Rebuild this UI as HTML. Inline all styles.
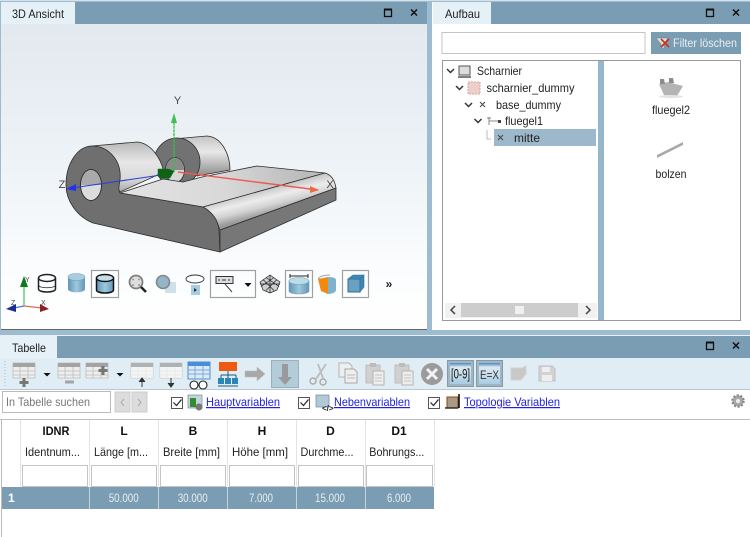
<!DOCTYPE html>
<html><head><meta charset="utf-8"><style>
html,body{margin:0;padding:0;background:#fff;width:750px;height:537px;overflow:hidden}
svg{display:block;font-family:"Liberation Sans",sans-serif;font-size:12px;fill:#222;filter:blur(.3px)}
.l{fill:#2222dd;text-decoration:underline}
.c{text-anchor:middle}
.b{font-weight:bold}
</style></head><body>
<svg width="750" height="537" viewBox="0 0 750 537" xmlns="http://www.w3.org/2000/svg">
<defs>
<linearGradient id="bg" x1="0" y1="0" x2="0" y2="1"><stop offset="0" stop-color="#e0e7ee"/><stop offset=".5" stop-color="#eef3f7"/><stop offset=".85" stop-color="#fcfdfe"/><stop offset="1" stop-color="#fff"/></linearGradient>
<linearGradient id="barrel" x1="0" y1="0" x2="0" y2="1"><stop offset="0" stop-color="#b8b8b8"/><stop offset=".4" stop-color="#e6e6e6"/><stop offset=".75" stop-color="#d8d8d8"/><stop offset="1" stop-color="#a8a8a8"/></linearGradient>
<linearGradient id="barrel2" x1="0" y1="0" x2="0" y2="1"><stop offset="0" stop-color="#c4c4c4"/><stop offset=".4" stop-color="#e8e8e8"/><stop offset="1" stop-color="#8c8c8c"/></linearGradient>
<linearGradient id="plate" gradientUnits="userSpaceOnUse" x1="130" y1="205" x2="300" y2="165"><stop offset="0" stop-color="#e2e2e2"/><stop offset=".55" stop-color="#d8d8d8"/><stop offset="1" stop-color="#bcbcbc"/></linearGradient>
<linearGradient id="round" gradientUnits="userSpaceOnUse" x1="203" y1="205" x2="209" y2="229"><stop offset="0" stop-color="#c8c8c8"/><stop offset=".35" stop-color="#ececec"/><stop offset=".65" stop-color="#d4d4d4"/><stop offset="1" stop-color="#9a9a9a"/></linearGradient>
<linearGradient id="cyl" x1="0" y1="0" x2="1" y2="0"><stop offset="0" stop-color="#5f95b7"/><stop offset=".5" stop-color="#9fc8dc"/><stop offset="1" stop-color="#6396b6"/></linearGradient>
<linearGradient id="win" x1="0" y1="0" x2="0" y2="1"><stop offset="0" stop-color="#4d86bb"/><stop offset=".2" stop-color="#dce9f2"/><stop offset="1" stop-color="#a9cce0"/></linearGradient>
<g id="tbl"><rect width="22" height="15" fill="#eeeeee" stroke="#b0b0b0" stroke-width=".6"/><rect width="22" height="4" fill="#a4a4a4"/><path d="M0 8h22M0 12h22M7 4v11M15 4v11" stroke="#bcbcbc" stroke-width=".8" fill="none"/></g>
<g id="pad"><rect x="1" y="3" width="14" height="18" fill="#d0d0d0" stroke="#bcbcbc"/><rect x="5" y="1" width="6" height="4" fill="#bcbcbc"/><rect x="8" y="9" width="11" height="14" fill="#eee" stroke="#b4b4b4"/><path d="M10 13h7M10 16h7M10 19h7" stroke="#c4c4c4"/></g>
</defs>

<rect width="750" height="537" fill="#9dbccf"/>
<rect x="0" y="0" width="750" height="1" fill="#d5e2ea"/>

<!-- 3D panel -->
<rect x="1" y="2" width="426" height="327" fill="url(#bg)"/>
<rect x="75" y="2" width="352" height="22" fill="#7b9db3"/>
<rect x="1" y="2" width="74" height="22" fill="#e6f1f7"/>
<text x="12" y="18" textLength="52" lengthAdjust="spacingAndGlyphs">3D Ansicht</text>
<rect x="384.500" y="9.500" width="7" height="7" fill="none" stroke="#111" stroke-width="1.300"/><path d="M384 9.500h8" stroke="#111" stroke-width="2"/>
<path d="M411 9.500l6 6M417 9.500l-6 6" stroke="#111" stroke-width="1.500"/>

<!-- model -->
<g stroke="#2e2e2e" stroke-width=".8" stroke-linejoin="round">
<!-- back barrel -->
<path d="M173 139L207 136C222 137 230 155 230 170L197 176L196 150Z" fill="url(#barrel2)"/>
<ellipse cx="177" cy="162" rx="23" ry="24" fill="#727272"/>
<ellipse cx="175" cy="170" rx="9.500" ry="12.500" fill="#d8d8d8"/>
<path d="M166 170C166 162 170 158 175 158C180 158 184 162 184 170Z" fill="#8a8a8a" stroke="none"/>
<!-- front barrel -->
<path d="M92 146L137 142C150 143 160 156 164 172L120 192Z" fill="url(#barrel)"/>
<!-- plate -->
<path d="M120 193L163 179L183 182L202 177L257 166L325 173L203 207Z" fill="url(#plate)"/>
<path d="M203 207L325 173C332 175 335 182 336 188L220 230C216 219 211 212 203 207Z" fill="url(#round)"/>
<!-- side -->
<path d="M220 230L336 188V200L220 252Z" fill="#777"/>
<!-- front face -->
<path d="M120 193L203 207C212 212 218 220 219 230L220 252L93 223C76 216 66 200 66 185C66 163 78 146 92 146C108 146 122 160 120 180C119 186 118 190 120 193Z" fill="#6f6f6f"/>
<ellipse cx="91" cy="185" rx="10.500" ry="15.500" fill="#dcdcdc"/>
<path d="M81 185C81 176 85 170 91 170C97 170 101 176 101 185Z" fill="#aaa" stroke="none"/>
<ellipse cx="91" cy="185" rx="10.500" ry="15.500" fill="none"/>
</g>
<!-- axes -->
<path d="M174 172L174 120" stroke="#34c248" stroke-width="1.300" stroke-dasharray="3 .6"/>
<path d="M174 113l-3 10h6z" fill="#3fbf55"/>
<path d="M178 172L318 190" stroke="#ee5a50" stroke-width="1.400"/>
<path d="M319 190l-9-4v7z" fill="#ee6a40"/>
<path d="M168 174L72 188" stroke="#2a3fd0" stroke-width="1.100"/>
<path d="M66 189l10-5v7z" fill="#2233ee"/>
<path d="M158 169h10l6 2-4 7-10 0-2-3z" fill="#0f6412" stroke="#063" stroke-width=".5"/>
<text x="177.500" y="104" class="c" style="font-size:11px" fill="#444">Y</text>
<text x="330" y="188" class="c" style="font-size:11px" fill="#444">X</text>
<text x="62" y="188" class="c" style="font-size:11px" fill="#444">Z</text>

<!-- bottom toolbar -->
<path d="M24 306V285" stroke="#58c868" stroke-width="1.300"/><path d="M24 276l-4 11h8z" fill="#0d7a1e"/>
<path d="M24 306L42 308" stroke="#e06a60" stroke-width="1.300"/><path d="M49 309l-9-5v8z" fill="#8f1f26"/>
<path d="M24 306L14 308" stroke="#5b6ce0" stroke-width="1.300"/><path d="M6 309l10-5v8z" fill="#1e2b95"/>
<text x="25" y="282" style="font-size:7px" fill="#444">Y</text><text x="41" y="305" style="font-size:7px" fill="#444">X</text><text x="11" y="305" style="font-size:7px" fill="#444">Z</text>

<g fill="none" stroke="#222" stroke-width="1.500"><ellipse cx="47" cy="278" rx="8.500" ry="3.500"/><path d="M38.500 278V289C38.500 293 55.500 293 55.500 289V278"/><path d="M38.500 285.500C41 288.500 53 288.500 55.500 285.500" stroke-width=".7"/></g>
<path d="M68 277V289C68 293.500 85 293.500 85 289V277Z" fill="url(#cyl)"/><ellipse cx="76.500" cy="277" rx="8.500" ry="3.500" fill="#a9cde0" stroke="#6f9fbc" stroke-width=".6"/>
<rect x="91.500" y="270.500" width="27" height="27" fill="none" stroke="#a0a0a0" stroke-width="1.200"/>
<path d="M96.500 278V290C96.500 294 113.500 294 113.500 290V278Z" fill="url(#cyl)" stroke="#111" stroke-width="1.500"/><ellipse cx="105" cy="278" rx="8.500" ry="3.500" fill="#c3dde9" stroke="#111" stroke-width="1.400"/>

<circle cx="136" cy="282" r="6.500" fill="#dedede" stroke="#7f7f7f" stroke-width="1.800"/><path d="M141 287l5 5" stroke="#222" stroke-width="2.500"/><path d="M132.500 279.500h1M138.500 279.500h1M132.500 285h1M138.500 285h1" stroke="#555" stroke-width="1.500"/>
<rect x="165" y="282" width="11" height="11" fill="#d0e0ea"/><circle cx="163" cy="282" r="6.500" fill="#93b5ca" stroke="#858585" stroke-width="1.600"/>
<ellipse cx="195" cy="279" rx="9" ry="4" fill="none" stroke="#333" stroke-width=".9"/><rect x="191" y="285" width="9" height="10" fill="#a8cde0"/><path d="M194 288v4l3-2z" fill="#234"/>
<rect x="210.500" y="270.500" width="45" height="27" fill="none" stroke="#a0a0a0" stroke-width="1.200"/>
<rect x="216" y="276.500" width="17" height="7" fill="#ddd" stroke="#333"/><path d="M218 280h2M222 280h4M228 280h2" stroke="#333"/><path d="M225 284l7 8" stroke="#444"/>
<path d="M244.500 283h7l-3.500 4z" fill="#111"/>
<g fill="#cfcfcf" stroke="#222" stroke-width=".7"><path d="M260 282l10-7 10 7-3 8-7 3-7-3z"/><path d="M263 279.500l11 11M266 277.500l13 9M270 275.500l0 17.500M277 279.500l-11 11M274 277.500l-13 9M260 284h20" fill="none"/></g>
<rect x="285.500" y="270.500" width="27" height="27" fill="none" stroke="#a0a0a0" stroke-width="1.200"/>
<path d="M289 281V291C289 295 309 295 309 291V281Z" fill="url(#cyl)" stroke="#6f9fbc" stroke-width=".6"/><ellipse cx="299" cy="281" rx="10" ry="3.500" fill="#bcdbe8" stroke="#6f9fbc" stroke-width=".6"/><path d="M290 276h18M290 274v4M308 274v4" stroke="#222"/>
<path d="M318 279L328 277V294L321 291Z" fill="#f28a10"/><path d="M328 277C333 277 336 278 336 280V290C336 292 333 294 328 294Z" fill="#7fb2cd"/><path d="M318 279C320 276 325 275 330 275" stroke="#8ab" fill="none"/>
<rect x="342.500" y="270.500" width="26" height="27" fill="none" stroke="#a0a0a0" stroke-width="1.200"/>
<path d="M348 279v13h12v-13z" fill="#6aa0c0" stroke="#2f6f9a"/><path d="M348 279l5-4h11l-4 4zM360 279l4-4v12l-4 5z" fill="#3f86b4" stroke="#2f6f9a" stroke-width=".6"/>
<text x="389" y="288" class="c b" style="font-size:12px" fill="#222">»</text>

<rect x="1" y="329" width="426" height="1" fill="#666"/>

<!-- Aufbau panel -->
<rect x="432" y="2" width="318" height="328" fill="#fff"/>
<rect x="491" y="2" width="259" height="22" fill="#7b9db3"/>
<rect x="433" y="2" width="58" height="22" fill="#e6f1f7"/>
<text x="445" y="18" textLength="35" lengthAdjust="spacingAndGlyphs">Aufbau</text>
<rect x="706.500" y="9.500" width="7" height="7" fill="none" stroke="#111" stroke-width="1.300"/><path d="M706 9.500h8" stroke="#111" stroke-width="2"/>
<path d="M733 9.500l6 6M739 9.500l-6 6" stroke="#111" stroke-width="1.500"/>
<rect x="442" y="32.500" width="203" height="21" fill="#fff" stroke="#c4c4c4"/>
<rect x="651" y="32" width="90" height="22" fill="#7b9db3"/>
<path d="M656 38h12l-4 6v5l-3-2v-3z" fill="#ddd" stroke="#777" stroke-width=".5"/><path d="M661 39l8 8M669 39l-8 8" stroke="#c8321c" stroke-width="1.600"/>
<text x="673" y="47" fill="#e8eef2" textLength="64" lengthAdjust="spacingAndGlyphs">Filter löschen</text>
<rect x="442.500" y="60.500" width="298" height="260" fill="#fff" stroke="#999"/>
<rect x="598" y="61" width="6" height="259" fill="#95b6cb"/>
<rect x="494" y="129" width="102" height="17" fill="#9db8ca"/>
<g fill="none" stroke="#333" stroke-width="1.500">
<path d="M447 69l3.500 3.500L454 69M456 86l3.500 3.500L463 86M465 103l3.500 3.500L472 103M474.500 119l3.500 3.500L481.500 119"/></g>
<path d="M487 130v9h4" fill="none" stroke="#bbb"/>
<rect x="459" y="66" width="11" height="9" fill="#ddd" stroke="#555"/><path d="M458 77h13" stroke="#555" stroke-width="1.500"/>
<rect x="468" y="82" width="12" height="12" fill="#eccfc8" stroke="#d6a79d" stroke-dasharray="2 1"/>
<path d="M480 102l5 5M485 102l-5 5M498 135l5 5M503 135l-5 5" stroke="#444"/>
<path d="M489 117v8M487 118h4M489 121h10" stroke="#888" fill="none"/><rect x="498" y="120" width="3" height="3" fill="#444"/>
<text x="477" y="75" textLength="45" lengthAdjust="spacingAndGlyphs">Scharnier</text>
<text x="486.500" y="92" textLength="88" lengthAdjust="spacingAndGlyphs">scharnier_dummy</text>
<text x="496" y="109" textLength="65" lengthAdjust="spacingAndGlyphs">base_dummy</text>
<text x="505" y="125" textLength="38" lengthAdjust="spacingAndGlyphs">fluegel1</text>
<text x="514" y="142" textLength="26" lengthAdjust="spacingAndGlyphs">mitte</text>
<!-- part thumbs -->
<path d="M659 84l9-2 15 4-6 10-13-1z" fill="#b4b4b4"/><path d="M660 79h4l1 5h-5zM669 78h4l1 5h-5z" fill="#8c8c8c"/><ellipse cx="671" cy="96.500" rx="12" ry="1.500" fill="#e2e2e2"/>
<text x="671" y="114" class="c" textLength="38" lengthAdjust="spacingAndGlyphs">fluegel2</text>
<path d="M657 155L683 142V145L657 158Z" fill="#aaa"/>
<text x="671" y="178" class="c" textLength="31" lengthAdjust="spacingAndGlyphs">bolzen</text>
<!-- scrollbar -->
<rect x="445" y="303" width="152" height="15" fill="#f1f1f1"/>
<rect x="461" y="303" width="117" height="14" fill="#cdcdcd"/>
<rect x="515" y="306" width="9" height="8" fill="#f0f0f0"/>
<path d="M455 306l-4 4 4 4M586 306l4 4-4 4" fill="none" stroke="#444" stroke-width="1.500"/>

<!-- Tabelle panel -->
<rect x="0" y="335" width="750" height="1" fill="#e6eff4"/>
<rect x="0" y="336" width="750" height="201" fill="#fff"/>
<rect x="57" y="336" width="693" height="22" fill="#7b9db3"/>
<rect x="0" y="336" width="57" height="22" fill="#e6f1f7"/>
<text x="12" y="352" textLength="34" lengthAdjust="spacingAndGlyphs">Tabelle</text>
<rect x="706.500" y="342.500" width="7" height="7" fill="none" stroke="#111" stroke-width="1.300"/><path d="M706 342.500h8" stroke="#111" stroke-width="2"/>
<path d="M733 342.500l6 6M739 342.500l-6 6" stroke="#111" stroke-width="1.500"/>
<rect x="0" y="358" width="750" height="31" fill="#e0edf4"/>
<rect x="0" y="389" width="750" height="1" fill="#b9c9d2"/>
<path d="M5 361v26" stroke="#a9bcc7" stroke-dasharray="1 2"/>

<use href="#tbl" x="13" y="363"/><path d="M24 378v9M19.500 382.500h9" stroke="#777" stroke-width="3"/>
<path d="M43.500 373h7l-3.500 3.500z" fill="#111"/>
<use href="#tbl" x="58" y="363"/><path d="M65 382h9" stroke="#a4a4a4" stroke-width="3"/>
<use href="#tbl" x="86" y="363"/><path d="M103 366v9M98.500 370.500h9" stroke="#777" stroke-width="3"/>
<path d="M116.500 373h7l-3.500 3.500z" fill="#111"/>
<use href="#tbl" x="131" y="363" opacity=".8"/><rect x="131" y="367" width="22" height="11" fill="#f6f6f6" opacity=".7"/><path d="M142 387v-8M139 382l3-4 3 4" fill="#333" stroke="#333"/>
<use href="#tbl" x="160" y="363" opacity=".8"/><rect x="160" y="367" width="22" height="11" fill="#f6f6f6" opacity=".7"/><path d="M171 378v8M168 383l3 4 3-4" fill="#333" stroke="#333"/>
<rect x="188" y="362" width="22" height="17" fill="#dbe9f5" stroke="#4f8fd0"/><rect x="188" y="362" width="22" height="4" fill="#4a8ddb"/><path d="M188 370h22M188 374h22M195 366v13M203 366v13" stroke="#5f9ad8" stroke-width=".7"/>
<circle cx="194" cy="385" r="4" fill="#fff" stroke="#222" stroke-width="1.100"/><circle cx="203" cy="385" r="4" fill="#fff" stroke="#222" stroke-width="1.100"/>
<rect x="219" y="362" width="18" height="9" fill="#ee5a10"/><path d="M228 371v4M221 375h15M221 375v3M228 375v3M236 375v3" stroke="#1c5a80" fill="none"/><path d="M218 378h6v6h-6zM225 378h6v6h-6zM232 378h6v6h-6z" fill="#2a86b8"/><path d="M218 386h20" stroke="#1c5a80"/>
<path d="M245 371h12v-4l8 7-8 7v-4h-12z" fill="#a8a8a8" stroke="#bbb" stroke-width=".5"/>
<rect x="271.500" y="360.500" width="27" height="27" fill="#b3ccd9" stroke="#9cb0bc"/>
<path d="M282 364h6v13h4l-7 8-7-8h4z" fill="#9a9a9a"/>
<path d="M326 364l-10 15M318 364l5 14" stroke="#bcbcbc" stroke-width="1.800"/><circle cx="313" cy="381" r="3" fill="none" stroke="#aaa" stroke-width="1.400"/><circle cx="323" cy="382" r="3" fill="none" stroke="#aaa" stroke-width="1.400"/>
<path d="M339 363h10l3 3v11h-13z" fill="#eee" stroke="#b4b4b4"/><path d="M345 369h9l3 3v11h-12z" fill="#eee" stroke="#a8a8a8"/><path d="M347 375h8M347 378h8" stroke="#bbb"/>
<use href="#pad" x="365" y="362"/><use href="#pad" x="394" y="362"/>
<circle cx="432" cy="374" r="11" fill="#9b9b9b"/><path d="M427 369l10 10M437 369l-10 10" stroke="#f2f2f2" stroke-width="3"/>
<rect x="447.500" y="360.500" width="26" height="26" fill="#9fb6c4" stroke="#8699a6"/>
<rect x="450" y="363" width="21" height="21" fill="url(#win)"/><text x="460.500" y="378.500" class="c" style="font-size:14px" fill="#111" textLength="19" lengthAdjust="spacingAndGlyphs">[0-9]</text>
<rect x="476.500" y="360.500" width="26" height="26" fill="#9fb6c4" stroke="#8699a6"/>
<rect x="479" y="363" width="21" height="21" fill="url(#win)"/><text x="489.500" y="379" class="c" style="font-size:12px" fill="#333" textLength="19" lengthAdjust="spacingAndGlyphs">E=X</text>
<path d="M511 368h11l4-2v8l-5 6h-10z" fill="#c8c8c8" stroke="#d2d2d2"/>
<path d="M539 366h13l3 3v12h-16z" fill="#d2d2d2" stroke="#c0c0c0"/><rect x="542" y="367" width="8" height="5" fill="#eee"/><rect x="542" y="375" width="10" height="6" fill="#eee"/>

<!-- search row -->
<rect x="2.500" y="391.500" width="108" height="21" fill="#fff" stroke="#bbb"/>
<text x="6" y="406" fill="#777" textLength="84" lengthAdjust="spacingAndGlyphs">In Tabelle suchen</text>
<rect x="115" y="392" width="15" height="20" fill="#dcdcdc" stroke="#ccc"/><rect x="132" y="392" width="15" height="20" fill="#dcdcdc" stroke="#ccc"/>
<path d="M124 399l-3 3.500 3 3.500M138 399l3 3.500-3 3.500" fill="none" stroke="#aaa"/>
<g fill="#fff" stroke="#555"><rect x="171.500" y="397.500" width="11" height="11"/><rect x="298.500" y="397.500" width="11" height="11"/><rect x="428.500" y="397.500" width="11" height="11"/></g>
<g fill="none" stroke="#222" stroke-width="1.200"><path d="M173.500 402.500l3 3 5-6M300.500 402.500l3 3 5-6M430.500 402.500l3 3 5-6"/></g>
<rect x="188" y="395" width="14" height="13" fill="#c6d3dc" stroke="#6a8aa0" stroke-width=".7"/><rect x="190" y="398" width="6" height="9" fill="#2f8f2f"/><circle cx="199" cy="407" r="3.500" fill="#777"/>
<rect x="316" y="395" width="13" height="12" fill="#b3c8d6" stroke="#6a8aa0" stroke-width=".7"/><text x="322" y="411" style="font-size:8px;font-weight:bold" fill="#222">&lt;/&gt;</text>
<rect x="447" y="397" width="11" height="11" fill="#a89a86" stroke="#8a4a12"/><path d="M459 394v14" stroke="#111" stroke-width="1.600"/><path d="M445 408h13" stroke="#222" stroke-width="1.400"/>
<text x="206" y="406" class="l" textLength="74" lengthAdjust="spacingAndGlyphs">Hauptvariablen</text>
<text x="334" y="406" class="l" textLength="76" lengthAdjust="spacingAndGlyphs">Nebenvariablen</text>
<text x="464" y="406" class="l" textLength="96" lengthAdjust="spacingAndGlyphs">Topologie Variablen</text>
<circle cx="738" cy="401" r="5.500" fill="#aaa" stroke="#888" stroke-width="2.500" stroke-dasharray="2 1.500"/><circle cx="738" cy="401" r="2" fill="#eee"/>

<!-- table -->
<rect x="0" y="419" width="750" height="1" fill="#c0c0c0"/>
<rect x="1" y="420" width="1" height="117" fill="#bbb"/>
<g fill="#e4e4e4"><rect x="20" y="420" width="1" height="67"/><rect x="89" y="420" width="1" height="67"/><rect x="158" y="420" width="1" height="67"/><rect x="227" y="420" width="1" height="67"/><rect x="296" y="420" width="1" height="67"/><rect x="365" y="420" width="1" height="67"/><rect x="434" y="420" width="1" height="67"/></g>
<g text-anchor="middle" style="font-weight:bold" fill="#111">
<text x="56" y="435" textLength="27" lengthAdjust="spacingAndGlyphs">IDNR</text><text x="124" y="435">L</text><text x="193" y="435">B</text><text x="262" y="435">H</text><text x="330.500" y="435">D</text><text x="399" y="435">D1</text></g>
<text x="25" y="456" textLength="55" lengthAdjust="spacingAndGlyphs">Identnum...</text>
<text x="94" y="456" textLength="54" lengthAdjust="spacingAndGlyphs">Länge [m...</text>
<text x="163" y="456" textLength="57" lengthAdjust="spacingAndGlyphs">Breite [mm]</text>
<text x="232" y="456" textLength="56" lengthAdjust="spacingAndGlyphs">Höhe [mm]</text>
<text x="300.500" y="456" textLength="53" lengthAdjust="spacingAndGlyphs">Durchme...</text>
<text x="369.300" y="456" textLength="55" lengthAdjust="spacingAndGlyphs">Bohrungs...</text>
<g fill="#fff" stroke="#c4c4c4"><rect x="22.500" y="465.500" width="65" height="21"/><rect x="91.500" y="465.500" width="65" height="21"/><rect x="160.500" y="465.500" width="65" height="21"/><rect x="229.500" y="465.500" width="65" height="21"/><rect x="298.500" y="465.500" width="65" height="21"/><rect x="366.500" y="465.500" width="66" height="21"/></g>
<rect x="2" y="487" width="432" height="22" fill="#7b9db3"/>
<g fill="#c6d2da"><rect x="89" y="487" width="1" height="22"/><rect x="158" y="487" width="1" height="22"/><rect x="227" y="487" width="1" height="22"/><rect x="296" y="487" width="1" height="22"/><rect x="365" y="487" width="1" height="22"/></g>
<text x="8" y="502" style="font-weight:bold" fill="#fff">1</text>
<g text-anchor="middle" fill="#e6edf1"><text x="123.700" y="502" textLength="30" lengthAdjust="spacingAndGlyphs">50.000</text><text x="192.700" y="502" textLength="30" lengthAdjust="spacingAndGlyphs">30.000</text><text x="261" y="502" textLength="24" lengthAdjust="spacingAndGlyphs">7.000</text><text x="330" y="502" textLength="30" lengthAdjust="spacingAndGlyphs">15.000</text><text x="399" y="502" textLength="24" lengthAdjust="spacingAndGlyphs">6.000</text></g>
</svg>
</body></html>
